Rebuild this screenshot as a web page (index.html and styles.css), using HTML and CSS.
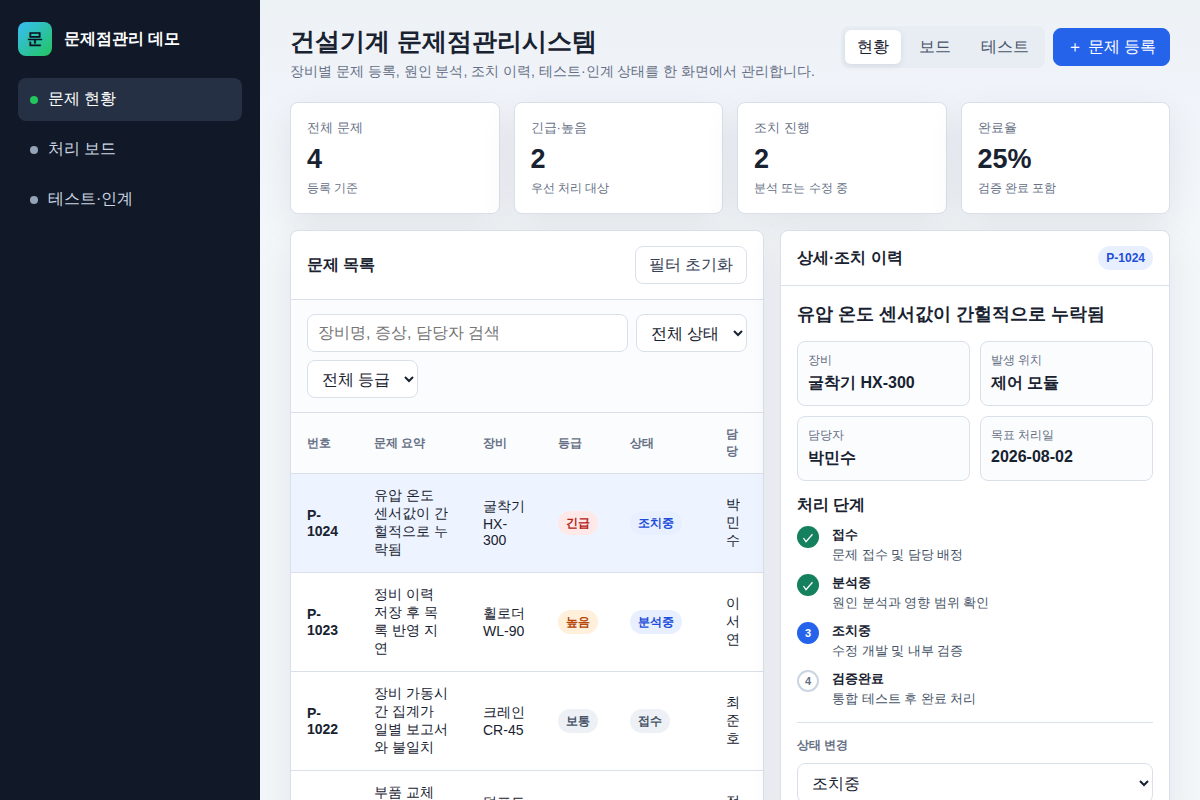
FILE: index.html
```html
<!doctype html>
<html lang="ko">
<head>
  <meta charset="UTF-8">
  <meta name="viewport" content="width=device-width, initial-scale=1.0">
  <title>건설기계 문제점관리시스템</title>
  <link rel="stylesheet" href="styles.css">
</head>
<body>
  <div class="app">
    <aside class="sidebar">
      <div class="brand">
        <div class="brand-mark">문</div>
        <strong>문제점관리 데모</strong>
      </div>
      <nav class="nav">
        <button type="button" class="nav-item active"><span class="dot"></span>문제 현황</button>
        <button type="button" class="nav-item"><span class="dot"></span>처리 보드</button>
        <button type="button" class="nav-item"><span class="dot"></span>테스트·인계</button>
      </nav>
    </aside>

    <main class="main">
      <header class="topbar">
        <div>
          <h1>건설기계 문제점관리시스템</h1>
          <p>장비별 문제 등록, 원인 분석, 조치 이력, 테스트·인계 상태를 한 화면에서 관리합니다.</p>
        </div>
        <div class="actions">
          <div class="tabs">
            <button type="button" class="active">현황</button>
            <button type="button">보드</button>
            <button type="button">테스트</button>
          </div>
          <button type="button" class="btn primary">＋ 문제 등록</button>
        </div>
      </header>

      <section class="stats">
        <article class="stat"><span>전체 문제</span><strong>4</strong><small>등록 기준</small></article>
        <article class="stat"><span>긴급·높음</span><strong>2</strong><small>우선 처리 대상</small></article>
        <article class="stat"><span>조치 진행</span><strong>2</strong><small>분석 또는 수정 중</small></article>
        <article class="stat"><span>완료율</span><strong>25%</strong><small>검증 완료 포함</small></article>
      </section>

      <div class="workspace">
        <section class="panel">
          <div class="panel-head">
            <h2>문제 목록</h2>
            <button type="button" class="btn">필터 초기화</button>
          </div>
          <div class="filters">
            <input type="search" class="search" placeholder="장비명, 증상, 담당자 검색" aria-label="문제 검색">
            <select aria-label="상태">
              <option>전체 상태</option>
              <option>접수</option>
              <option>분석중</option>
              <option>조치중</option>
            </select>
            <select aria-label="등급">
              <option>전체 등급</option>
              <option>긴급</option>
              <option>높음</option>
              <option>보통</option>
            </select>
          </div>
          <table class="issues">
            <colgroup>
              <col class="col-id">
              <col class="col-title">
              <col class="col-machine">
              <col class="col-level">
              <col class="col-status">
              <col>
            </colgroup>
            <thead>
              <tr>
                <th>번호</th>
                <th>문제 요약</th>
                <th>장비</th>
                <th>등급</th>
                <th>상태</th>
                <th>담당</th>
              </tr>
            </thead>
            <tbody>
              <tr class="selected">
                <td><strong>P-1024</strong></td>
                <td>유압 온도 센서값이 간헐적으로 누락됨</td>
                <td>굴착기 HX-300</td>
                <td><span class="badge red">긴급</span></td>
                <td><span class="badge blue">조치중</span></td>
                <td>박민수</td>
              </tr>
              <tr>
                <td><strong>P-1023</strong></td>
                <td>정비 이력 저장 후 목록 반영 지연</td>
                <td>휠로더 WL-90</td>
                <td><span class="badge orange">높음</span></td>
                <td><span class="badge blue">분석중</span></td>
                <td>이서연</td>
              </tr>
              <tr>
                <td><strong>P-1022</strong></td>
                <td>장비 가동시간 집계가 일별 보고서와 불일치</td>
                <td>크레인 CR-45</td>
                <td><span class="badge">보통</span></td>
                <td><span class="badge">접수</span></td>
                <td>최준호</td>
              </tr>
              <tr>
                <td><strong>P-1021</strong></td>
                <td>부품 교체 알림이 중복으로 계속 발송됨</td>
                <td>덤프트럭 DT-20</td>
                <td><span class="badge">보통</span></td>
                <td><span class="badge green">검증완료</span></td>
                <td>정하늘</td>
              </tr>
            </tbody>
          </table>
        </section>

        <section class="panel">
          <div class="panel-head">
            <h2>상세·조치 이력</h2>
            <span class="badge blue">P-1024</span>
          </div>
          <div class="detail">
            <h3>유압 온도 센서값이 간헐적으로 누락됨</h3>
            <div class="meta">
              <div><span>장비</span><strong>굴착기 HX-300</strong></div>
              <div><span>발생 위치</span><strong>제어 모듈</strong></div>
              <div><span>담당자</span><strong>박민수</strong></div>
              <div><span>목표 처리일</span><strong>2026-08-02</strong></div>
            </div>
            <h4>처리 단계</h4>
            <ol class="steps">
              <li class="done">
                <span class="step-mark"><svg viewBox="0 0 22 22" aria-hidden="true"><path d="M6.5 12 9 15.7 15.5 8.3"/></svg></span>
                <div><strong>접수</strong><p>문제 접수 및 담당 배정</p></div>
              </li>
              <li class="done">
                <span class="step-mark"><svg viewBox="0 0 22 22" aria-hidden="true"><path d="M6.5 12 9 15.7 15.5 8.3"/></svg></span>
                <div><strong>분석중</strong><p>원인 분석과 영향 범위 확인</p></div>
              </li>
              <li class="current">
                <span class="step-mark">3</span>
                <div><strong>조치중</strong><p>수정 개발 및 내부 검증</p></div>
              </li>
              <li>
                <span class="step-mark">4</span>
                <div><strong>검증완료</strong><p>통합 테스트 후 완료 처리</p></div>
              </li>
            </ol>
            <form class="status-form">
              <label for="status">상태 변경</label>
              <select id="status">
                <option>접수</option>
                <option>분석중</option>
                <option selected>조치중</option>
                <option>검증완료</option>
              </select>
            </form>
          </div>
        </section>
      </div>
    </main>
  </div>
</body>
</html>
```
FILE: styles.css
```css
:root {
  --ink: #182230;
  --muted: #667085;
  --line: #d9e0ea;
  --blue: #2563eb;
  --shadow: 0 12px 36px rgba(15, 23, 42, 0.08);
}

* {
  box-sizing: border-box;
}

body {
  margin: 0;
  font-family: "Liberation Sans", sans-serif;
  color: var(--ink);
  background: linear-gradient(180deg, #edf2f5 0, #f0f3f9 90px, #f4f7fa 240px);
}

button,
input,
select {
  font: inherit;
}

button {
  cursor: pointer;
}

h1,
h2,
h3,
h4,
p {
  margin: 0;
}

.app {
  display: grid;
  grid-template-columns: 260px minmax(0, 1fr);
  min-height: 100vh;
}

.sidebar {
  background: #111827;
  color: #fff;
  padding: 22px 18px;
}

.brand {
  display: flex;
  align-items: center;
  gap: 12px;
  margin-bottom: 22px;
}

.brand-mark {
  display: grid;
  place-items: center;
  width: 34px;
  height: 34px;
  border-radius: 8px;
  background: linear-gradient(135deg, #38bdf8, #22c55e);
  color: #07111f;
  font-weight: bold;
}

.nav {
  display: grid;
  gap: 7px;
}

.nav-item {
  display: flex;
  align-items: center;
  gap: 10px;
  width: 100%;
  height: 43px;
  padding: 0 12px;
  border: 0;
  border-radius: 8px;
  background: transparent;
  color: #cbd5e1;
  text-align: left;
}

.nav-item.active {
  background: #253044;
  color: #fff;
}

.dot {
  width: 8px;
  height: 8px;
  border-radius: 50%;
  background: #94a3b8;
}

.active .dot {
  background: #22c55e;
}

.main {
  padding: 26px 30px;
}

.topbar {
  display: flex;
  justify-content: space-between;
  align-items: flex-start;
  gap: 16px;
  margin-bottom: 22px;
}

h1 {
  font-size: 25px;
  line-height: 30px;
}

.topbar p {
  margin-top: 6px;
  color: var(--muted);
  font-size: 14px;
  line-height: 18px;
}

.actions {
  display: flex;
  align-items: center;
  gap: 8px;
  flex: none;
}

.tabs {
  display: flex;
  gap: 6px;
  padding: 4px;
  border-radius: 8px;
  background: #e8edf4;
}

.tabs button {
  height: 34px;
  padding: 0 12px;
  border: 0;
  border-radius: 6px;
  background: transparent;
  color: #475467;
}

.tabs .active {
  background: #fff;
  color: var(--ink);
  box-shadow: 0 2px 6px rgba(15, 23, 42, 0.08);
}

.btn {
  height: 38px;
  padding: 0 13px;
  border: 1px solid var(--line);
  border-radius: 8px;
  background: #fff;
  color: #344054;
}

.btn.primary {
  border-color: var(--blue);
  background: var(--blue);
  color: #fff;
}

.stats {
  display: grid;
  grid-template-columns: repeat(4, 1fr);
  gap: 14px;
  margin-bottom: 16px;
}

.stat {
  padding: 16px;
  border: 1px solid var(--line);
  border-radius: 8px;
  background: #fff;
  box-shadow: var(--shadow);
}

.stat span,
.stat strong,
.stat small {
  display: block;
}

.stat span {
  color: var(--muted);
  font-size: 13px;
  line-height: 18px;
}

.stat strong {
  margin: 6px 0;
  font-size: 27px;
  line-height: 32px;
}

.stat small {
  padding-bottom: 2px;
  color: var(--muted);
  font-size: 12px;
  line-height: 14px;
}

.workspace {
  display: grid;
  grid-template-columns: minmax(0, 1fr) 390px;
  gap: 16px;
  align-items: start;
}

.panel {
  border: 1px solid var(--line);
  border-radius: 8px;
  background: #fff;
  box-shadow: var(--shadow);
  overflow: hidden;
}

.panel-head {
  display: flex;
  justify-content: space-between;
  align-items: center;
  padding: 15px 16px;
  border-bottom: 1px solid var(--line);
}

h2,
h4 {
  font-size: 16px;
  line-height: 22px;
}

.filters {
  display: flex;
  flex-wrap: wrap;
  gap: 8px;
  padding: 14px 16px;
  border-bottom: 1px solid var(--line);
  background: #fbfcfe;
}

input,
select {
  height: 38px;
  padding: 0 10px;
  border: 1px solid var(--line);
  border-radius: 8px;
  background: #fff;
  color: var(--ink);
}

.search {
  flex: 1 1 220px;
  min-width: 0;
}

.issues {
  width: 100%;
  table-layout: fixed;
  border-collapse: separate;
  border-spacing: 0;
  font-size: 14px;
}

.col-id {
  width: 67px;
}

.col-title {
  width: 109px;
}

.col-machine {
  width: 75px;
}

.col-level {
  width: 72px;
}

.col-status {
  width: 96px;
}

.issues th,
.issues td {
  padding: 13px 16px;
  border-bottom: 1px solid var(--line);
  text-align: left;
  vertical-align: middle;
}

.issues th {
  background: #fbfcfe;
  color: var(--muted);
  font-size: 12px;
  line-height: 17px;
}

.issues .selected td {
  background: #eef4ff;
}

.badge {
  display: inline-flex;
  align-items: center;
  height: 24px;
  padding: 0 8px;
  border-radius: 12px;
  background: #edf1f6;
  color: #475467;
  font-size: 12px;
  font-weight: bold;
  white-space: nowrap;
}

.badge.red {
  background: #ffe9e8;
  color: #b42318;
}

.badge.orange {
  background: #fff0dc;
  color: #b54708;
}

.badge.blue {
  background: #e8efff;
  color: #1d4ed8;
}

.badge.green {
  background: #e3f6ed;
  color: #15805d;
}

.detail {
  padding: 16px;
}

h3 {
  margin-bottom: 15px;
  font-size: 18px;
  line-height: 24px;
}

.meta {
  display: grid;
  grid-template-columns: 1fr 1fr;
  gap: 10px;
  margin-bottom: 13px;
}

.meta div {
  min-height: 65px;
  padding: 10px;
  border: 1px solid var(--line);
  border-radius: 8px;
  background: #fbfcfe;
}

.meta span,
.meta strong {
  display: block;
}

.meta span {
  margin-bottom: 5px;
  color: var(--muted);
  font-size: 12px;
  line-height: 16px;
}

.steps {
  display: grid;
  gap: 10px;
  margin: 10px 0 14px;
  padding: 0;
  list-style: none;
}

.steps li {
  display: flex;
  gap: 13px;
  font-size: 13px;
  line-height: 18px;
}

.steps strong {
  display: block;
}

.steps p {
  margin-top: 2px;
  color: #475467;
}

.step-mark {
  display: grid;
  place-items: center;
  width: 22px;
  height: 22px;
  border: 2px solid #cbd5e1;
  border-radius: 50%;
  color: var(--muted);
  font-size: 11px;
  font-weight: bold;
}

.step-mark svg {
  width: 22px;
  height: 22px;
  fill: none;
  stroke: #fff;
  stroke-width: 1.3;
}

.done .step-mark {
  border: 0;
  background: #15805d;
}

.current .step-mark {
  border-color: var(--blue);
  background: var(--blue);
  color: #fff;
}

.status-form {
  display: grid;
  gap: 9px;
  padding-top: 14px;
  border-top: 1px solid var(--line);
}

.status-form label {
  color: var(--muted);
  font-size: 12px;
  font-weight: bold;
  line-height: 17px;
}

.status-form select {
  height: 40px;
}
```
